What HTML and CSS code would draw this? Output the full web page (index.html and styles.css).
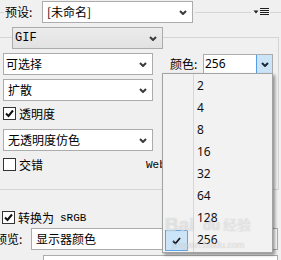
FILE: index.html
```html
<!DOCTYPE html>
<html>
<head>
<meta charset="utf-8">
<link rel="stylesheet" href="styles.css">
</head>
<body>
<div class="panel">
  <div class="top-row">
    <span class="rule rule-lead"></span>
    <span class="lbl lbl-preset">预设:</span>
    <div class="sel sel-preset"><span class="sel-text">[未命名]</span><svg class="chev" viewBox="0 0 8 5"><polyline points="1,1 4,4 7,1"/></svg></div>
    <span class="rule rule-fill"></span>
    <svg class="menu-icon" viewBox="0 0 17 10"><polygon points="1.5,3.5 6.5,3.5 4,6.5"/><rect x="8" y="1" width="9" height="1"/><rect x="8" y="3" width="9" height="1"/><rect x="8" y="5" width="9" height="1"/><rect x="8" y="7" width="9" height="1"/></svg>
    <span class="rule rule-tail"></span>
  </div>

  <div class="group">
    <div class="sel sel-format"><span class="sel-text mono">GIF</span><svg class="chev" viewBox="0 0 8 5"><polyline points="1,1 4,4 7,1"/></svg></div>
    <div class="row">
      <div class="sel sel-main sel-tight"><span class="sel-text">可选择</span><svg class="chev" viewBox="0 0 8 5"><polyline points="1,1 4,4 7,1"/></svg></div>
      <span class="lbl lbl-colors">颜色:</span>
      <div class="sel sel-colors"><span class="sel-text num">256</span><span class="drop-btn"><svg class="chev chev-blue" viewBox="0 0 8 5"><polyline points="1,1 4,4 7,1"/></svg></span></div>
    </div>
    <div class="row">
      <div class="sel sel-main"><span class="sel-text">扩散</span><svg class="chev" viewBox="0 0 8 5"><polyline points="1,1 4,4 7,1"/></svg></div>
    </div>
    <div class="check-row check-trans">
      <span class="box"><svg viewBox="0 0 11 11"><polyline points="2,5.5 4.5,8 9,2.5"/></svg></span><span>透明度</span>
    </div>
    <div class="row row-dither">
      <div class="sel sel-main"><span class="sel-text">无透明度仿色</span><svg class="chev" viewBox="0 0 8 5"><polyline points="1,1 4,4 7,1"/></svg></div>
    </div>
    <div class="check-row check-interlace">
      <span class="box"></span><span class="interlace-text">交错</span><span class="mono web">Web</span>
    </div>
  </div>

  <div class="check-row check-srgb">
    <span class="box"><svg viewBox="0 0 11 11"><polyline points="2,5.5 4.5,8 9,2.5"/></svg></span><span>转换为</span><span class="mono srgb">sRGB</span>
  </div>

  <div class="row row-preview">
    <span class="lbl lbl-preview">预览:</span>
    <div class="sel sel-preview"><span class="sel-text">显示器颜色</span><svg class="chev" viewBox="0 0 8 5"><polyline points="1,1 4,4 7,1"/></svg></div>
  </div>

  <div class="row row-meta">
    <span class="lbl lbl-meta">元数据:</span>
    <div class="sel sel-meta"><span class="sel-text">版权和联系信息</span></div>
  </div>
</div>

<div class="popup">
  <div class="item">2</div>
  <div class="item">4</div>
  <div class="item">8</div>
  <div class="item">16</div>
  <div class="item">32</div>
  <div class="item">64</div>
  <div class="item">128</div>
  <div class="item checked"><span class="mark"><svg viewBox="0 0 11 10"><polyline points="2,5 4.5,7.5 9,2"/></svg></span>256</div>
</div>

<div class="watermark">
  <span class="wm-bai">Bai</span>
  <span class="wm-du">du</span>
  <span class="wm-jy">经验</span>
  <span class="wm-url">jingyan.baidu.com</span>
</div>
</body>
</html>
```

FILE: styles.css
```css
body {
  margin: 0;
  width: 281px;
  height: 260px;
  overflow: hidden;
  position: relative;
  background: #f0f0f0;
  color: #000;
  font: 12px/16px "Noto Sans CJK SC", sans-serif;
}

.panel {
  width: 281px;
}

.top-row {
  display: flex;
  align-items: center;
  height: 24px;
}

.rule {
  height: 1px;
  background: #d5d5d5;
}

.rule-lead { width: 4px; }
.rule-fill { flex: 1; margin: 0 1px 0 2px; }
.rule-tail { width: 11px; margin-left: 1px; }

.menu-icon {
  width: 17px;
  height: 10px;
  fill: #1e1e1e;
}

.lbl {
  white-space: nowrap;
  box-sizing: border-box;
}

.lbl-preset {
  width: 38px;
  padding-left: 1px;
}

.sel {
  box-sizing: border-box;
  height: 22px;
  border: 1px solid #acacac;
  background: #fff;
  display: flex;
  align-items: center;
  padding-left: 4px;
  white-space: nowrap;
  overflow: hidden;
}

.sel-text {
  flex: 1;
}

.chev {
  width: 8px;
  height: 5px;
  margin-right: 5px;
  flex: none;
  fill: none;
  stroke: #3a3a3a;
  stroke-width: 2;
}

.sel-preset { width: 151px; }

.mono {
  font-family: "Liberation Mono", monospace;
  font-size: 12px;
}

.group {
  margin-top: 13px;
  width: 279px;
  box-sizing: border-box;
  border: 1px solid #d5d5d5;
  border-left: 0;
  padding-bottom: 18px;
}

.sel-format {
  width: 151px;
  margin: -11px 0 0 12px;
  padding-left: 2px;
  background: linear-gradient(#ececec, #e2e2e2);
}

.row {
  display: flex;
  align-items: center;
  margin-top: 4px;
  padding-left: 3px;
}

.sel-main { width: 150px; }
.sel-tight { padding-left: 2px; }

.lbl-colors {
  width: 33px;
  margin-left: 17px;
}

.sel-colors {
  width: 70px;
  height: 20px;
  padding-left: 1px;
  align-items: stretch;
}

.sel-colors .sel-text {
  display: flex;
  align-items: center;
}

.num {
  font-family: "Noto Sans", sans-serif;
}

.drop-btn {
  width: 17px;
  margin: -1px -1px -1px 0;
  box-sizing: border-box;
  border: 1px solid #569de5;
  background: #cce4f7;
  display: flex;
  align-items: center;
  justify-content: center;
}

.drop-btn .chev {
  margin: 0;
  stroke: #1c2a3a;
}

.check-row {
  display: flex;
  align-items: center;
  height: 13px;
  padding-left: 3px;
  white-space: nowrap;
}

.box {
  width: 13px;
  height: 13px;
  box-sizing: border-box;
  border: 1px solid #333;
  background: #fff;
  margin-right: 3px;
  display: flex;
  align-items: center;
  justify-content: center;
  flex: none;
}

.box svg {
  width: 11px;
  height: 11px;
  fill: none;
  stroke: #111;
  stroke-width: 2;
}

.check-trans { margin-top: 6px; }
.row-dither { margin-top: 9px; }
.check-interlace { margin-top: 7px; }

.interlace-text { width: 127px; }

.web { font-size: 11px; }

.check-srgb {
  margin-top: 21px;
  padding-left: 2px;
}

.srgb {
  margin-left: 6px;
  font-size: 11px;
}

.row-preview {
  padding-left: 0;
}

.lbl-preview {
  width: 36px;
  margin-left: -5px;
}

.sel-preview { width: 247px; }

.row-meta {
  margin-top: 5px;
  padding-left: 0;
}

.lbl-meta {
  width: 43px;
  padding-left: 0;
  margin-left: -2px;
  width: 45px;
}

.sel-meta { width: 235px; }

.popup {
  position: absolute;
  left: 162px;
  top: 73px;
  width: 111px;
  height: 180px;
  box-sizing: border-box;
  border: 1px solid #a3a3a3;
  background: #f2f2f2;
  box-shadow: 2px 2px 3px rgba(0, 0, 0, 0.4);
  padding-top: 1px;
  z-index: 5;
}

.popup::before {
  content: "";
  position: absolute;
  left: 30px;
  top: 0;
  bottom: 0;
  width: 1px;
  background: #d7d7d7;
}

.item {
  position: relative;
  height: 22px;
  display: flex;
  align-items: center;
  padding-left: 34px;
  font: 12px/16px "Noto Sans", sans-serif;
  color: #111;
}

.mark {
  position: absolute;
  left: 2px;
  top: 1px;
  width: 23px;
  height: 21px;
  box-sizing: border-box;
  border: 1px solid #62a2e4;
  background: #cce4f7;
  display: flex;
  align-items: center;
  justify-content: center;
}

.mark svg {
  width: 11px;
  height: 10px;
  fill: none;
  stroke: #1a1a1a;
  stroke-width: 1.8;
}

.watermark {
  position: absolute;
  left: 0;
  top: 0;
  z-index: 6;
  pointer-events: none;
}

.watermark span {
  position: absolute;
  white-space: nowrap;
  color: rgba(255, 255, 255, 0.55);
  text-shadow: 0 0 1px rgba(90, 90, 90, 0.35);
}

.wm-bai {
  left: 165px;
  top: 213px;
  font: bold 19px/24px "Liberation Sans", sans-serif;
}

.wm-du {
  left: 203px;
  top: 216px;
  font: bold 14px/18px "Liberation Sans", sans-serif;
}

.wm-jy {
  left: 223px;
  top: 215px;
  font: 14px/18px "Noto Sans CJK SC", sans-serif;
}

.wm-url {
  left: 172px;
  top: 240px;
  font: 9px/11px "Liberation Sans", sans-serif;
}
```
